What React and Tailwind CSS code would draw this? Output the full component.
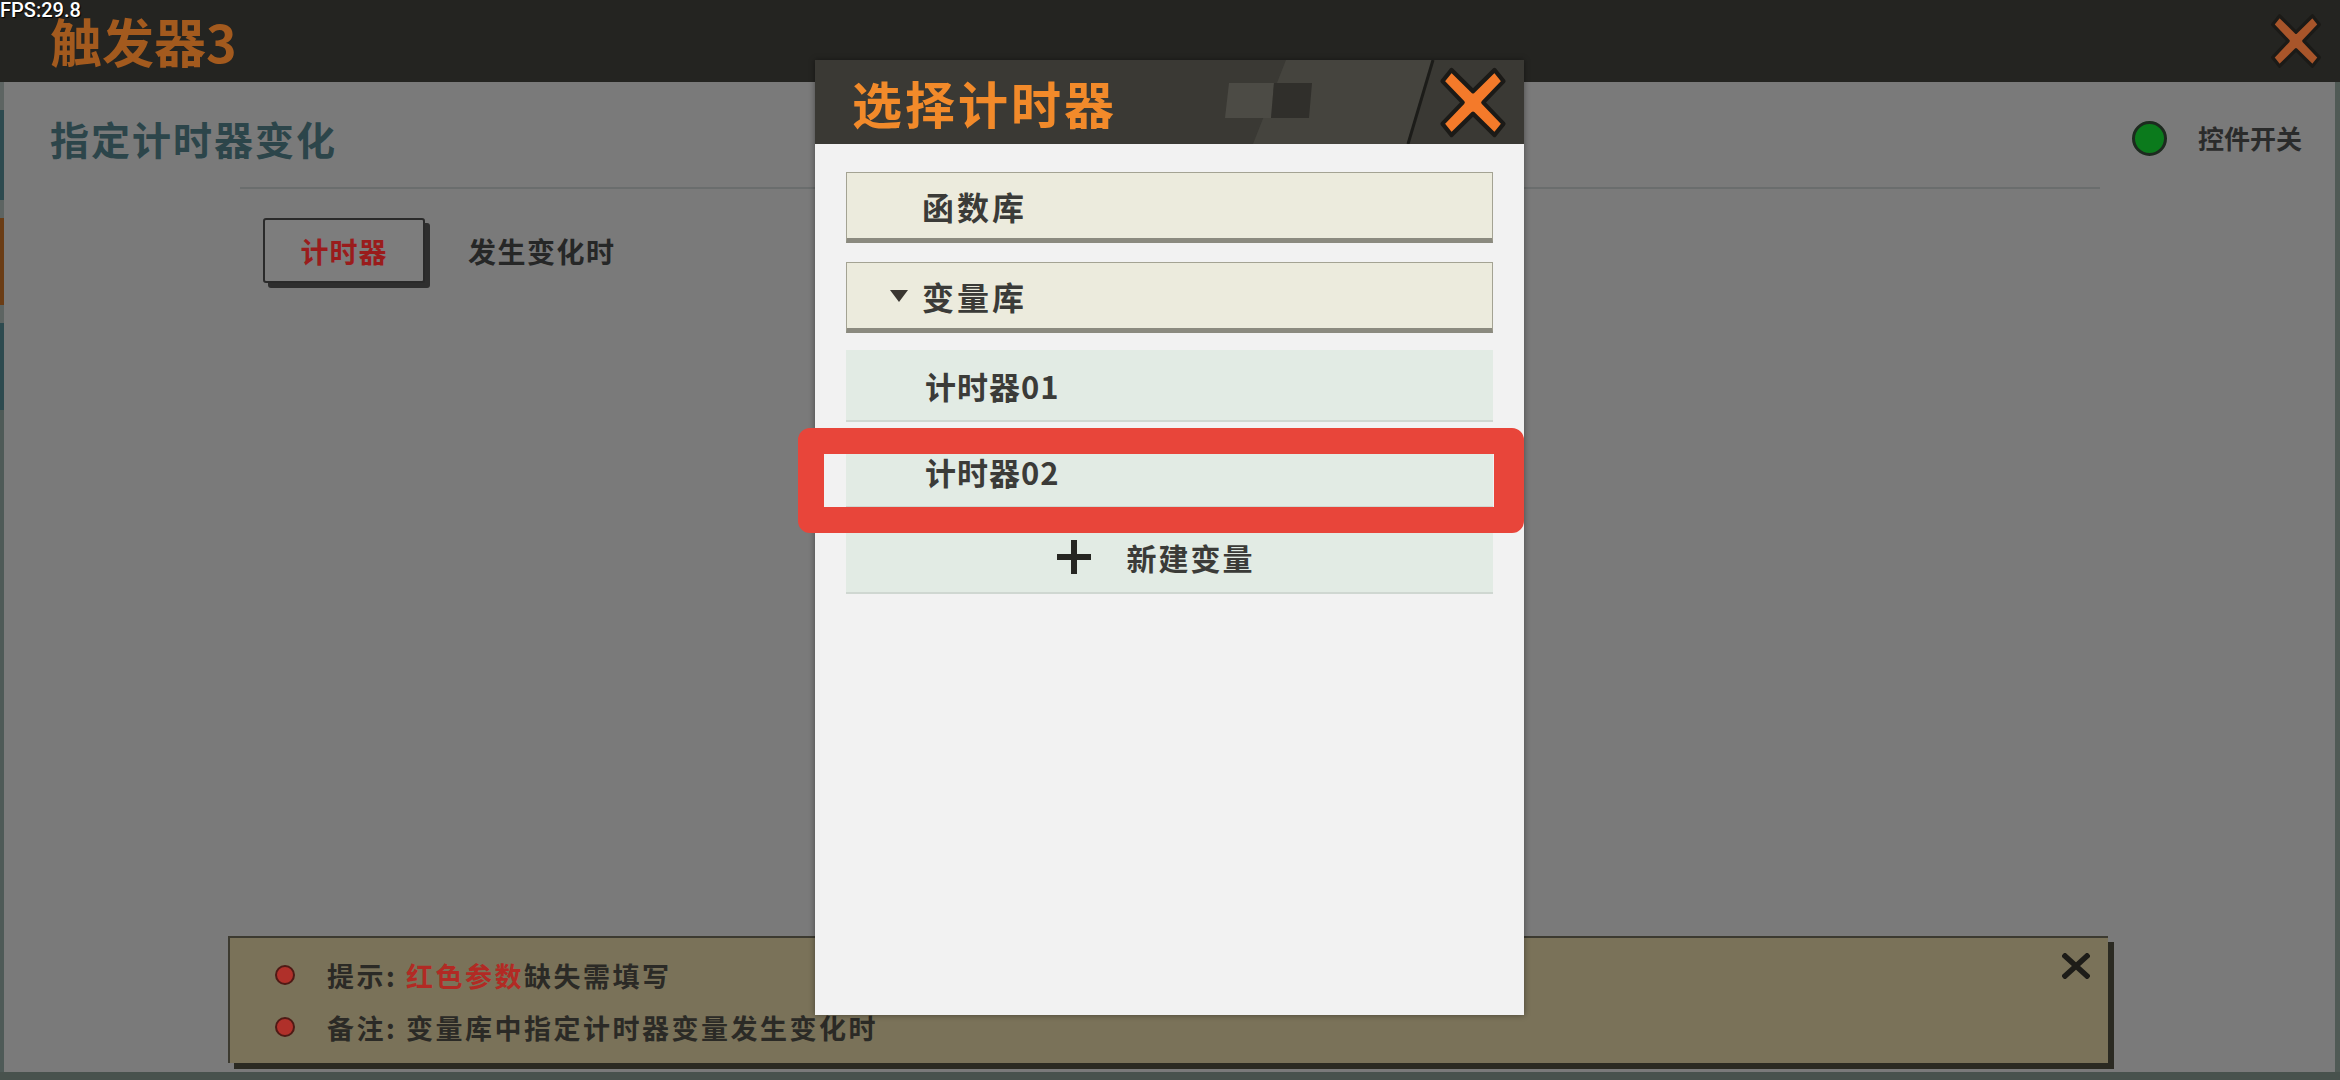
import React from 'react';

const font = "font-['Noto_Sans_CJK_SC','Noto_Sans',sans-serif]";

const ChunkyX = ({ className, fill }) => (
    <svg viewBox="0 0 60 60" className={className} preserveAspectRatio="none">
        <path
            d="M11 4 L30 21 L49 4 L57 13 L39 30 L57 47 L49 56 L30 39 L11 56 L3 47 L21 30 L3 13 Z"
            fill={fill}
            stroke="#1b1a17"
            strokeWidth="3.5"
            strokeLinejoin="round"
        />
    </svg>
);

const HeaderDeco = () => (
    <svg viewBox="0 0 237 84" className="w-[237px] h-[84px] shrink-0">
        <polygon points="86,0 232,0 207,84 53,84" fill="#45443e" />
        <polygon points="29,23 74,23 71,58 25,58" fill="#4c4b45" />
        <polygon points="74,23 112,23 109,58 71,58" fill="#302f2b" />
        <line x1="233" y1="0" x2="208" y2="84" stroke="#1c1c19" strokeWidth="3" />
    </svg>
);

const LibRow = ({ label, open }) => (
    <div className="h-[71px] bg-[#ecebdd] border border-[#a4a393] border-b-[5px] border-b-[#8b8a7f] flex items-center">
        <div className="w-[75px] flex justify-end pr-[14px]">
            {open && (
                <svg viewBox="0 0 18 12" className="w-[18px] h-[12px]">
                    <polygon points="0,0 18,0 9,12" fill="#3a3631" />
                </svg>
            )}
        </div>
        <span className="text-[32px] tracking-[3px] font-bold text-[#3b3b38] leading-none">{label}</span>
    </div>
);

const VarRow = ({ children, center }) => (
    <div className={`h-[72px] bg-[#e2ebe4] border-b-2 border-[#cfd7d1] flex items-center ${center ? 'justify-center pr-[28px]' : 'pl-[79px]'}`}>
        {children}
    </div>
);

const HintLine = ({ children }) => (
    <div className="h-[36px] flex items-center gap-[32px]">
        <span className="w-[20px] h-[20px] rounded-full bg-[#b0302a] border-2 border-[#4f1a15]" />
        <span className="text-[27px] tracking-[2.5px] font-bold text-[#2b2a26] leading-none">{children}</span>
    </div>
);

export default function App() {
    return (
        <div className={`relative w-[2340px] h-[1080px] overflow-hidden bg-[#48524d] ${font}`}>
            {/* top bar */}
            <div className="h-[82px] bg-[#242421] flex items-center justify-between pl-[50px] pr-[18px]">
                <span className="text-[52px] font-bold text-[#a35a1e] leading-none">触发器3</span>
                <ChunkyX className="w-[52px] h-[58px]" fill="#a8552a" />
            </div>

            <div className="flex h-[990px]">
                <div className="w-[4px] flex flex-col">
                    <div className="h-[28px] bg-[#5d6462]" />
                    <div className="h-[90px] bg-[#2d4a4f]" />
                    <div className="h-[18px] bg-[#5d6462]" />
                    <div className="h-[87px] bg-[#6b3d15]" />
                    <div className="h-[18px] bg-[#5d6462]" />
                    <div className="h-[87px] bg-[#2d4a4f]" />
                    <div className="flex-1 bg-[#4e5a57]" />
                </div>

                <main className="w-[2331px] bg-[#7a7a7a] flex flex-col">
                    <div className="flex items-center justify-between pt-[34px] pl-[46px] pr-[33px]">
                        <h1 className="text-[39px] tracking-[2px] font-bold text-[#2c454a] leading-[44px]">指定计时器变化</h1>
                        <div className="flex items-center gap-[31px]">
                            <span className="w-[35px] h-[35px] rounded-full bg-[#0b7a1c] border-[3px] border-[#1d2a1f]" />
                            <span className="text-[26px] font-bold text-[#2a2b2b] leading-none">控件开关</span>
                        </div>
                    </div>

                    <div className="mt-[27px] ml-[236px] w-[1860px] h-[2px] bg-[#6a6d6d]" />

                    <div className="mt-[29px] pl-[259px] flex items-center gap-[43px]">
                        <div className="w-[162px] h-[65px] bg-[#7d7d7d] border-2 border-[#2a2a2a] rounded-[3px] shadow-[5px_5px_0_#2e2e2e] flex items-center justify-center">
                            <span className="text-[28px] tracking-[1px] font-bold text-[#9a1c1c] leading-none">计时器</span>
                        </div>
                        <span className="text-[28px] tracking-[1.5px] font-bold text-[#262727] leading-none">发生变化时</span>
                    </div>

                    <div className="flex-1" />

                    <div className="ml-[224px] mb-[9px] w-[1880px] h-[127px] bg-[#7a7259] border-t-2 border-l-2 border-[#3c3a30] shadow-[6px_6px_0_#2b2a22] flex justify-between items-start pl-[45px] pr-[18px]">
                        <div className="pt-[19px] flex flex-col gap-[16px]">
                            <HintLine>
                                提示: <span className="text-[#b22a24]">红色参数</span>缺失需填写
                            </HintLine>
                            <HintLine>备注: 变量库中指定计时器变量发生变化时</HintLine>
                        </div>
                        <svg viewBox="0 0 28 26" className="w-[28px] h-[26px] mt-[15px]">
                            <path d="M3 3 L25 23 M25 3 L3 23" stroke="#1d1c18" strokeWidth="5.5" strokeLinecap="square" />
                        </svg>
                    </div>
                </main>

                <div className="w-[5px] bg-[#505a55]" />
            </div>

            {/* fps overlay */}
            <span className="absolute left-0 top-0 text-[20px] leading-[20px] font-['Roboto',sans-serif] font-medium text-white [text-shadow:1px_1px_1px_#000]">
                FPS:29.8
            </span>

            {/* modal */}
            <div className="absolute left-[815px] top-[60px] w-[709px] h-[955px] bg-[#f2f2f2] flex flex-col shadow-[0_0_6px_rgba(0,0,0,0.4)]">
                <div className="h-[84px] bg-[#3a3934] flex items-center">
                    <span className="pl-[37px] text-[50px] tracking-[3px] font-bold text-[#f28a2a] leading-none">选择计时器</span>
                    <div className="ml-auto flex items-center">
                        <HeaderDeco />
                        <div className="w-[87px] h-[84px] flex items-center pl-[2px]">
                            <ChunkyX className="w-[68px] h-[75px]" fill="#f47a2a" />
                        </div>
                    </div>
                </div>

                <div className="px-[31px] pt-[28px] flex flex-col">
                    <LibRow label="函数库" />
                    <div className="mt-[19px]">
                        <LibRow label="变量库" open />
                    </div>
                    <div className="mt-[17px] flex flex-col gap-[14px]">
                        <VarRow>
                            <span className="text-[31px] tracking-[1px] font-bold text-[#3b3b38] leading-none">计时器01</span>
                        </VarRow>
                        <VarRow>
                            <span className="text-[31px] tracking-[1px] font-bold text-[#3b3b38] leading-none">计时器02</span>
                        </VarRow>
                        <VarRow center>
                            <svg viewBox="0 0 34 34" className="w-[34px] h-[34px] mr-[36px]">
                                <rect x="14" y="0" width="6" height="34" fill="#262622" />
                                <rect x="0" y="14" width="34" height="6" fill="#262622" />
                            </svg>
                            <span className="text-[30px] tracking-[2px] font-bold text-[#3b3b38] leading-none">新建变量</span>
                        </VarRow>
                    </div>
                </div>
            </div>

            {/* red annotation */}
            <div className="absolute left-[798px] top-[428px] w-[726px] h-[105px] border-[26px] border-r-[30px] border-[#e8453a] rounded-[12px]" />
        </div>
    );
}
